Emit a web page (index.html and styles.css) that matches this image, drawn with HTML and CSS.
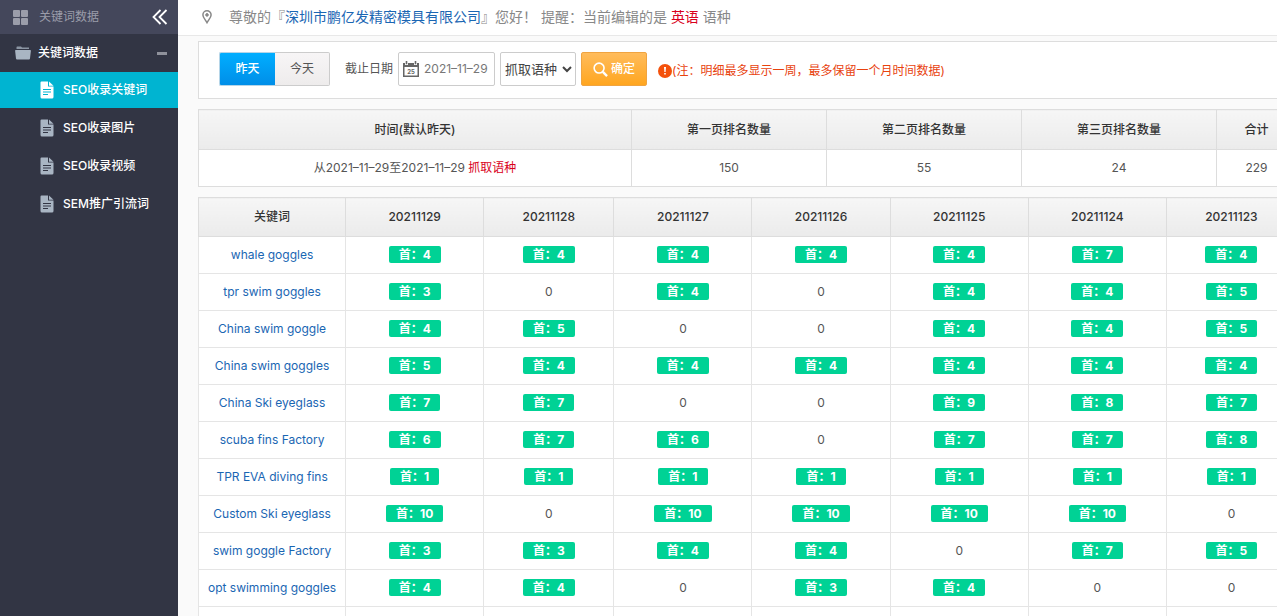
FILE: index.html
```html
<!DOCTYPE html>
<html lang="zh-CN">
<head>
    <meta charset="UTF-8">
    <meta name="viewport" content="width=device-width, initial-scale=1.0">
    <title>关键词数据</title>
    <link rel="stylesheet" href="styles.css">
</head>
<body>
    <!-- Shared icons -->
    <svg class="sprite" aria-hidden="true">
        <symbol id="icon-doc" viewBox="0 0 14 18">
            <path fill="currentColor" fill-rule="evenodd" d="M1.5 0.5H8V5.5H13.5V16a1.5 1.5 0 0 1-1.5 1.5H2A1.5 1.5 0 0 1 0.5 16V1.5a1 1 0 0 1 1-1zM3 8v1h8V8zM3 10.500v1h8v-1zM3 13v1h5v-1z"/>
            <path fill="currentColor" d="M9 0.500L13.500 4.700H9z"/>
        </symbol>
    </svg>

    <div class="layout">
        <aside class="sidebar">
            <div class="sidebar-top">
                <svg class="icon-grid" width="15" height="15" viewBox="0 0 15 15" fill="#9b9daa"><rect width="7" height="7" rx="1"/><rect x="8" width="7" height="7" rx="1"/><rect y="8" width="7" height="7" rx="1"/><rect x="8" y="8" width="7" height="7" rx="1"/></svg>
                <span>关键词数据</span>
                <button class="collapse" type="button" aria-label="收起">
                    <svg width="16" height="16" viewBox="0 0 16 16" fill="none" stroke="#fff" stroke-width="1.8"><path d="M8.500 1L1.500 8l7 7M14.500 1l-7 7 7 7"/></svg>
                </button>
            </div>
            <div class="sidebar-group">
                <svg width="16" height="14" viewBox="0 0 16 14" fill="#a9b5c3"><path d="M1.500 3V1.200Q1.500 0.500 2.200 0.500H6L7 1.500H14V3z" opacity="0.75"/><path d="M0.800 4H15.200Q16 4 15.900 4.800L15 12.500Q14.900 13.500 14 13.500H2Q1.100 13.500 1 12.500L0.100 4.800Q0 4 0.800 4z"/></svg>
                <span>关键词数据</span>
                <i class="minus"></i>
            </div>
            <nav class="menu">
                <a class="menu-item active" href="#"><svg class="doc"><use href="#icon-doc"/></svg>SEO收录关键词</a>
                <a class="menu-item" href="#"><svg class="doc"><use href="#icon-doc"/></svg>SEO收录图片</a>
                <a class="menu-item" href="#"><svg class="doc"><use href="#icon-doc"/></svg>SEO收录视频</a>
                <a class="menu-item" href="#"><svg class="doc"><use href="#icon-doc"/></svg>SEM推广引流词</a>
            </nav>
        </aside>

        <main class="main">
            <header class="header">
                <svg width="10" height="14" viewBox="0 0 10 14" fill="none" stroke="#888"><path stroke-width="1.500" d="M5 12.700C3.500 10 0.900 7.500 0.900 4.900a4.100 4.100 0 0 1 8.200 0C9.100 7.500 6.500 10 5 12.700z"/><circle cx="5" cy="4.900" r="1.300" fill="#888"/></svg>
                <p>尊敬的『<a href="#">深圳市鹏亿发精密模具有限公司</a>』您好！ 提醒：当前编辑的是 <em>英语</em> 语种</p>
            </header>

            <div class="content">
                <form class="filter">
                    <div class="tabs">
                        <button class="tab active" type="button">昨天</button>
                        <button class="tab" type="button">今天</button>
                    </div>
                    <label class="date-label" for="date">截止日期</label>
                    <div class="date-box">
                        <svg width="16" height="16" viewBox="0 0 16 16"><path fill="#666" fill-rule="evenodd" d="M0 2h2v2h3V2h6v2h3V2h2v14H0zM1.500 6v8.500h13V6z"/><path fill="#666" d="M2.700 0h1.600v3.300H2.700zM11.700 0h1.600v3.300h-1.600z"/><text x="8" y="13" text-anchor="middle" class="cal-day">25</text></svg>
                        <input id="date" type="text" value="2021–11–29">
                    </div>
                    <div class="select-box">
                        <select aria-label="抓取语种"><option>抓取语种</option></select>
                        <svg class="chevron" width="10" height="7" viewBox="0 0 10 7" fill="none" stroke="#444" stroke-width="2"><path d="M1 1l4 4 4-4"/></svg>
                    </div>
                    <button class="submit" type="submit">
                        <svg width="15" height="15" viewBox="0 0 16 16" fill="none" stroke="#fff"><circle cx="6.500" cy="6.500" r="5.300" stroke-width="1.700"/><path stroke-width="2.500" d="M10.500 10.500L15 15"/></svg>确定
                    </button>
                    <p class="note">
                        <svg width="14" height="14" viewBox="0 0 14 14"><circle cx="7" cy="7" r="7" fill="#f4510b"/><path fill="#fff" d="M6 3h2l-0.400 5H6.400zM6.200 9h1.600v1.600H6.200z"/></svg>(注：明细最多显示一周，最多保留一个月时间数据)
                    </p>
                </form>

                <table class="table summary">
                    <colgroup><col><col class="col-page"><col class="col-page"><col class="col-page"><col class="col-total"></colgroup>
                    <thead>
                        <tr><th>时间(默认昨天)</th><th>第一页排名数量</th><th>第二页排名数量</th><th>第三页排名数量</th><th>合计</th></tr>
                    </thead>
                    <tbody>
                        <tr><td>从2021–11–29至2021–11–29 <em>抓取语种</em></td><td>150</td><td>55</td><td>24</td><td>229</td></tr>
                    </tbody>
                </table>

                <table class="table detail">
                    <colgroup><col class="col-keyword"><col class="col-day"><col class="col-narrow"><col class="col-day"><col class="col-day"><col class="col-day"><col class="col-day"><col class="col-narrow"></colgroup>
                    <thead>
                        <tr><th>关键词</th><th>20211129</th><th>20211128</th><th>20211127</th><th>20211126</th><th>20211125</th><th>20211124</th><th>20211123</th></tr>
                    </thead>
                    <tbody>
                        <tr><td><a href="#">whale goggles</a></td><td><b>首：4</b></td><td><b>首：4</b></td><td><b>首：4</b></td><td><b>首：4</b></td><td><b>首：4</b></td><td><b>首：7</b></td><td><b>首：4</b></td></tr>
                        <tr><td><a href="#">tpr swim goggles</a></td><td><b>首：3</b></td><td>0</td><td><b>首：4</b></td><td>0</td><td><b>首：4</b></td><td><b>首：4</b></td><td><b>首：5</b></td></tr>
                        <tr><td><a href="#">China swim goggle</a></td><td><b>首：4</b></td><td><b>首：5</b></td><td>0</td><td>0</td><td><b>首：4</b></td><td><b>首：4</b></td><td><b>首：5</b></td></tr>
                        <tr><td><a href="#">China swim goggles</a></td><td><b>首：5</b></td><td><b>首：4</b></td><td><b>首：4</b></td><td><b>首：4</b></td><td><b>首：4</b></td><td><b>首：4</b></td><td><b>首：4</b></td></tr>
                        <tr><td><a href="#">China Ski eyeglass</a></td><td><b>首：7</b></td><td><b>首：7</b></td><td>0</td><td>0</td><td><b>首：9</b></td><td><b>首：8</b></td><td><b>首：7</b></td></tr>
                        <tr><td><a href="#">scuba fins Factory</a></td><td><b>首：6</b></td><td><b>首：7</b></td><td><b>首：6</b></td><td>0</td><td><b>首：7</b></td><td><b>首：7</b></td><td><b>首：8</b></td></tr>
                        <tr><td><a href="#">TPR EVA diving fins</a></td><td><b>首：1</b></td><td><b>首：1</b></td><td><b>首：1</b></td><td><b>首：1</b></td><td><b>首：1</b></td><td><b>首：1</b></td><td><b>首：1</b></td></tr>
                        <tr><td><a href="#">Custom Ski eyeglass</a></td><td><b>首：10</b></td><td>0</td><td><b>首：10</b></td><td><b>首：10</b></td><td><b>首：10</b></td><td><b>首：10</b></td><td>0</td></tr>
                        <tr><td><a href="#">swim goggle Factory</a></td><td><b>首：3</b></td><td><b>首：3</b></td><td><b>首：4</b></td><td><b>首：4</b></td><td>0</td><td><b>首：7</b></td><td><b>首：5</b></td></tr>
                        <tr><td><a href="#">opt swimming goggles</a></td><td><b>首：4</b></td><td><b>首：4</b></td><td>0</td><td><b>首：3</b></td><td><b>首：4</b></td><td>0</td><td>0</td></tr>
                        <tr><td></td><td></td><td></td><td></td><td></td><td></td><td></td><td></td></tr>
                    </tbody>
                </table>
            </div>
        </main>
    </div>
</body>
</html>
```
FILE: styles.css
```css
* {
    margin: 0;
    padding: 0;
    box-sizing: border-box;
}

body {
    font-family: Inter, "Noto Sans CJK SC", sans-serif;
    font-size: 12px;
    line-height: 18px;
    color: #555;
    background: #fafafa;
}

a {
    color: #1a66b3;
    text-decoration: none;
}

em {
    font-style: normal;
    color: #d9001b;
}

button,
input,
select {
    font: inherit;
    color: inherit;
}

svg {
    flex-shrink: 0;
}

.sprite {
    display: none;
}

.layout {
    display: flex;
    height: 100vh;
    overflow: hidden;
}

/* Sidebar */
.sidebar {
    flex: 0 0 178px;
    background: #323544;
    color: #fff;
}

.sidebar-top {
    display: flex;
    align-items: center;
    gap: 11px;
    height: 34px;
    padding: 0 10px 0 13px;
    background: #44475b;
    color: #9b9daa;
}

.collapse {
    margin-left: auto;
    height: 16px;
    background: none;
    border: 0;
}

.sidebar-group {
    display: flex;
    align-items: center;
    gap: 7px;
    height: 38px;
    padding: 0 11px 0 15px;
    font-weight: 500;
}

.minus {
    width: 10px;
    height: 3px;
    margin-left: auto;
    background: #8f919b;
}

.menu {
    display: flex;
    flex-direction: column;
    gap: 2px;
}

.menu-item {
    display: flex;
    align-items: center;
    gap: 9px;
    height: 36px;
    padding-left: 40px;
    color: #fff;
    font-weight: 500;
}

.menu-item.active {
    background: #00b4d1;
}

.doc {
    width: 14px;
    height: 18px;
    color: #a9b5c3;
}

.active .doc {
    color: #fff;
}

/* Main area */
.main {
    flex: 1;
    min-width: 0;
    overflow: hidden;
}

.header {
    display: flex;
    align-items: center;
    gap: 17px;
    height: 36px;
    padding: 0 0 2px 24px;
    background: #fff;
    border-bottom: 1px solid #e8e8e8;
    font-size: 14px;
    color: #888;
}

.header p {
    white-space: pre;
}

.content {
    min-width: 1119px;
    padding: 5px 0 0 20px;
}

.filter {
    display: flex;
    align-items: center;
    gap: 5px;
    height: 58px;
    padding: 0 20px 2px;
    background: #fff;
    border: 1px solid #ddd;
}

.tabs {
    display: flex;
    margin-right: 10px;
}

.tab {
    width: 55px;
    height: 34px;
    background: linear-gradient(#f7f5f6, #eeecec);
    border: 1px solid #ccc;
    border-left: 0;
    border-radius: 0 2px 2px 0;
}

.tab.active {
    width: 56px;
    background: linear-gradient(#00aeff, #008ee8);
    border: 1px solid #b5d5e8;
    border-right: 0;
    border-radius: 2px 0 0 2px;
    color: #fff;
    font-weight: 500;
}

.date-box {
    display: flex;
    align-items: center;
    gap: 5px;
    width: 97px;
    height: 34px;
    padding-left: 4px;
    border: 1px solid #ccc;
    border-radius: 2px;
    color: #777;
}

.date-box input {
    width: 100%;
    min-width: 0;
    border: 0;
    background: none;
}

.cal-day {
    font-size: 6px;
    font-weight: 700;
    fill: #666;
}

.select-box {
    position: relative;
}

.select-box select {
    appearance: none;
    display: block;
    width: 76px;
    height: 34px;
    padding-left: 4px;
    background: #fff;
    border: 1px solid #ccc;
    border-radius: 2px;
    font-size: 13px;
    color: #444;
}

.chevron {
    position: absolute;
    top: 14px;
    right: 4px;
    pointer-events: none;
}

.submit {
    display: flex;
    align-items: center;
    justify-content: center;
    gap: 3px;
    width: 66px;
    height: 34px;
    background: linear-gradient(#ffbc5c, #ffa620);
    border: 1px solid #f0a441;
    border-radius: 2px;
    color: #fff;
    font-weight: 500;
}

.note {
    display: flex;
    align-items: center;
    margin-left: 6px;
    padding-top: 3px;
    color: #e8420e;
}

/* Tables */
.table {
    width: 100%;
    margin-top: 10px;
    table-layout: fixed;
    border-collapse: collapse;
    background: #fff;
    border: 1px solid #ddd;
    text-align: center;
}

.table th {
    height: 39px;
    background: linear-gradient(#f6f6f6, #ebebeb);
    border: 1px solid #ddd;
    color: #333;
    font-weight: 500;
}

.table td {
    height: 37px;
    border: 1px solid #e5e5e5;
}

.summary th {
    height: 40px;
}

.summary td {
    border-color: #ddd;
}

.col-page {
    width: 195px;
}

.col-total {
    width: 80px;
}

.col-keyword {
    width: 147px;
}

.col-day {
    width: 138px;
}

.col-narrow {
    width: 130px;
}

.table b {
    display: inline-block;
    padding: 0 10px;
    line-height: 17px;
    background: #00d295;
    border-radius: 2px;
    color: #fff;
    font-weight: 700;
    vertical-align: top;
}
```
